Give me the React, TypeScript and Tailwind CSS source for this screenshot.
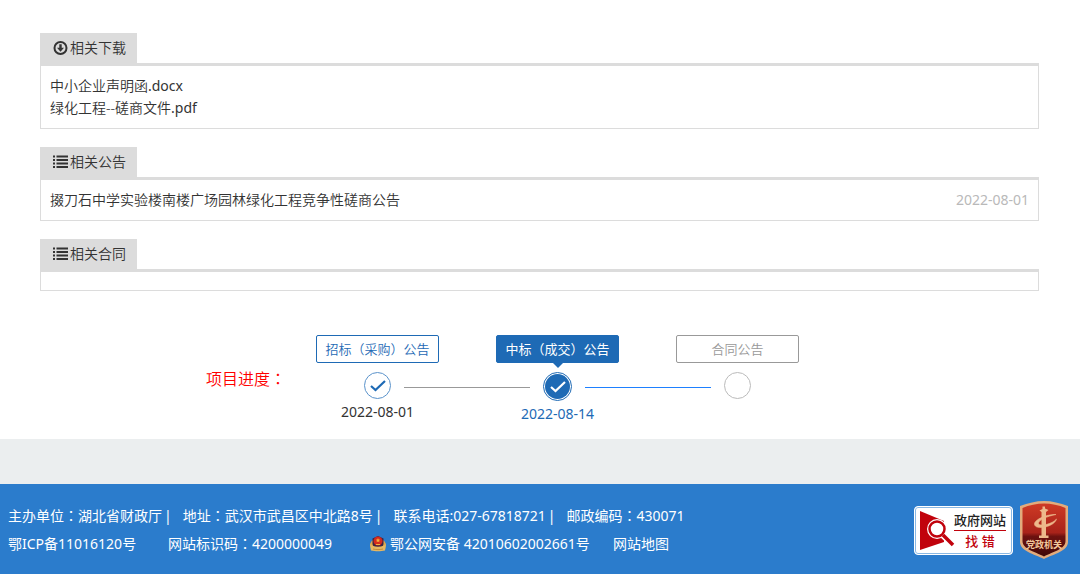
import React from 'react';

const CircleDownIcon: React.FC = () => (
  <svg className="h-[15px] w-[15px] shrink-0" viewBox="0 0 15 15" aria-hidden="true">
    <circle cx="7.5" cy="7" r="6" fill="none" stroke="#333" strokeWidth="2" />
    <path d="M6.3 3.300h2.400v3.400h2.300L7.500 10.700 4 6.700h2.300z" fill="#333" />
  </svg>
);

const ListIcon: React.FC = () => (
  <svg className="h-[15px] w-[15px] shrink-0" viewBox="0 0 15 15" fill="#333" aria-hidden="true">
    <path d="M0 0.500h2v2H0zM3.500 0.500H15v2H3.500zM0 4h2v2H0zM3.500 4H15v2H3.500zM0 7.500h2v2H0zM3.500 7.500H15v2H3.500zM0 11h2v2H0zM3.500 11H15v2H3.500z" />
  </svg>
);

const PoliceBadge: React.FC = () => (
  <svg className="h-4 w-4 shrink-0" viewBox="0 0 16 16" aria-hidden="true">
    <path d="M0 8 2 4.500h12L16 8l-1 6H1z" fill="#dda64c" />
    <path d="M8 0 13.500 2.500v5c0 3-3 4.500-5.500 5.500C5.500 12 2.500 10.500 2.500 7.500v-5z" fill="#3c2544" />
    <circle cx="8" cy="5" r="4.500" fill="#d5281d" />
    <path d="M8 2l.7 1.600 1.600.1-1.300 1 .5 1.600L8 5.400l-1.500.9.500-1.600-1.300-1 1.600-.1zM6 8h4v1H6z" fill="#f3b13c" />
    <path d="M0 8c2 3.500 14 3.500 16 0l-1 6.500c-4 1-10 1-14 0z" fill="#e6b761" />
    <path d="M3 13c3 .8 7 .8 10 0" fill="none" stroke="#a96b25" strokeWidth=".6" />
  </svg>
);

const FindErrorLogo: React.FC = () => (
  <svg className="h-[42px] w-[36px] shrink-0" viewBox="0 0 36 42" aria-hidden="true">
    <path d="M0 1 24 11v21L0 40z" fill="#c1020c" />
    <circle cx="17" cy="19" r="10" fill="#fff" />
    <circle cx="17" cy="19" r="7.500" fill="#fff" stroke="#c1020c" strokeWidth="2.500" />
    <path d="M23 25.500 32 34" stroke="#fff" strokeWidth="6" />
    <path d="M23 25 33 35" stroke="#c1020c" strokeWidth="3.500" />
  </svg>
);

const PartyShield: React.FC = () => (
  <svg className="h-[60px] w-[50px]" viewBox="0 0 50 60" role="img" aria-label="党政机关">
    <defs>
      <linearGradient id="shieldFill" x1="0" y1="0" x2="0" y2="1">
        <stop offset="0" stopColor="#cf3a25" />
        <stop offset=".55" stopColor="#a8231a" />
        <stop offset=".62" stopColor="#6d1210" />
        <stop offset="1" stopColor="#3f0808" />
      </linearGradient>
    </defs>
    <path d="M25 0C33 0 41 2 49 5v36c0 9-14 12-24 17C15 53 1 50 1 41V5C9 2 17 0 25 0z" fill="#e2ab7c" />
    <path d="M25 2.500C32 2.500 40 4 46.500 7v33c0 8-12 10.500-21.500 15.500C15.500 50.500 3.500 48 3.500 40V7C10 4 18 2.500 25 2.500z" fill="url(#shieldFill)" />
    <path d="M23.500 5.500h2.500v2l3.500 1.500-2.500 2v24.500H22.500V11l-2-1.500 3-1.500zM20 34.500h9.500v2.500H20z" fill="#edb98c" />
    <path d="M37 13.500C29 13 15 18 15.500 23.500c1 6 20 2.500 22-5.500-4 5-17 8-18 4.500C19 19 29 15 37 13.500z" fill="#edb98c" stroke="#edb98c" strokeWidth=".6" />
    <text x="25" y="47" textAnchor="middle" fontSize="9" fontWeight="700" fill="#f2c79c" className="font-['Noto_Sans_CJK_SC',sans-serif]">党政机关</text>
  </svg>
);

const Check: React.FC<{ color: string }> = ({ color }) => (
  <svg className="h-4 w-4" viewBox="0 0 16 16" fill="none" stroke={color} strokeWidth="2.200" aria-hidden="true">
    <path d="M1 8 5.500 12 15 3" />
  </svg>
);

// the centred full-width colon only exists in the TC cut
const Colon: React.FC = () => <span className="font-['Noto_Sans_CJK_TC',sans-serif] leading-none">：</span>;

const Divider: React.FC = () => <span className="mr-[11px] ml-0.5">|</span>;

interface PanelProps {
  title: string;
  icon: React.ReactNode;
  children?: React.ReactNode;
}

const Panel: React.FC<PanelProps> = ({ title, icon, children }) => (
  <section>
    <div className="flex">
      <h2 className="flex h-[30px] items-center gap-0.5 bg-[#dcdcdc] pr-[11px] pl-[13px]">
        {icon}
        {title}
      </h2>
    </div>
    <div className="border border-t-[3px] border-[#dcdcdc] px-[9px] py-[9px] leading-[22px]">{children}</div>
  </section>
);

const files = [
  { name: '中小企业声明函', ext: '.docx' },
  { name: '绿化工程--磋商文件', ext: '.pdf' },
];

const App: React.FC = () => {
  return (
    <div className="bg-white font-['Noto_Sans','Noto_Sans_CJK_SC',sans-serif] text-sm font-[350] text-[#333]">
      <main className="pt-[33px] pr-[41px] pb-3.5 pl-10">
        <div className="flex flex-col gap-[18px]">
          <Panel title="相关下载" icon={<CircleDownIcon />}>
            <ul>
              {files.map((file) => (
                <li key={file.name}><a href="#">{file.name}<span className="font-normal">{file.ext}</span></a></li>
              ))}
            </ul>
          </Panel>
          <Panel title="相关公告" icon={<ListIcon />}>
            <div className="flex justify-between">
              <a href="#">掇刀石中学实验楼南楼广场园林绿化工程竞争性磋商公告</a>
              <time className="font-normal text-[#b9b9b9]">2022-08-01</time>
            </div>
          </Panel>
          <Panel title="相关合同" icon={<ListIcon />} />
        </div>

        <div className="mt-11 flex pl-[166px]">
          <h3 className="mt-8 w-[110px] text-base font-[350] text-[#f00]">项目进度<Colon /></h3>
          <div>
            <div className="flex gap-[57px] text-center text-[13px] leading-[26px]">
              <div className="w-[123px] rounded-xs border border-[#1e6ab5] text-[#1e6ab5]">招标（采购）公告</div>
              <div className="relative w-[123px] rounded-xs border border-[#1e6ab5] bg-[#1e6ab5] font-normal text-white">
                中标（成交）公告
                <span className="absolute top-full left-1/2 -translate-x-1/2 border-x-[6px] border-t-[6px] border-x-transparent border-t-[#1e6ab5]" />
              </div>
              <div className="w-[123px] rounded-xs border border-[#999] text-[#999]">合同公告</div>
            </div>
            <div className="mt-[9px] flex gap-[13px] pl-12">
              <span className="flex h-[27px] w-[27px] items-center justify-center rounded-full border border-[#5b93cb]">
                <Check color="#1e6ab5" />
              </span>
              <span className="mt-[15px] h-px w-[126px] bg-[#999]" />
              <span className="flex h-[29px] w-[29px] items-center justify-center rounded-full border border-[#1e6ab5]">
                <span className="flex h-[25px] w-[25px] items-center justify-center rounded-full bg-[#1e6ab5]">
                  <Check color="#fff" />
                </span>
              </span>
              <span className="mt-[15px] h-px w-[126px] bg-[#1e80ff]" />
              <span className="h-[27px] w-[27px] rounded-full border border-[#bbb]" />
            </div>
            <div className="flex gap-[57px] text-center leading-[22px] font-normal">
              <time className="w-[123px]">2022-08-01</time>
              <time className="w-[123px] pt-0.5 text-[#1e6ab5]">2022-08-14</time>
            </div>
          </div>
        </div>
      </main>

      <div className="h-[45px] bg-[#ebeeef]" />

      <footer className="flex justify-between bg-[#2b7ccc] pt-[17px] pr-[11px] pb-[13px] pl-2 font-normal text-white">
        <div className="pt-px leading-7">
          <div className="flex">
            <span>主办单位<Colon />湖北省财政厅</span>
            <Divider />
            <span>地址<Colon />武汉市武昌区中北路8号</span>
            <Divider />
            <span>联系电话:027-67818721</span>
            <Divider />
            <span>邮政编码<Colon />430071</span>
          </div>
          <div className="flex">
            <a href="#" className="w-40">鄂ICP备11016120号</a>
            <span className="w-[202px]">网站标识码<Colon />4200000049</span>
            <a href="#" className="flex w-[243px] items-center gap-1">
              <PoliceBadge />
              鄂公网安备 42010602002661号
            </a>
            <a href="#">网站地图</a>
          </div>
        </div>
        <div className="flex gap-1.5">
          <a href="#" className="mt-[5px] flex h-[49px] w-[99px] items-center rounded-sm border border-white bg-white pl-[5px] ring-1 ring-inset ring-[#8ab8e3]">
            <FindErrorLogo />
            <span className="-ml-0.5 flex flex-col items-center text-[13px] leading-[18px] font-medium text-[#222]">
              <span>政府网站</span>
              <span className="my-px h-px w-full bg-[#c1020c]" />
              <span className="text-[#c1020c]">找 错</span>
            </span>
          </a>
          <a href="#"><PartyShield /></a>
        </div>
      </footer>
    </div>
  );
};

export default App;
